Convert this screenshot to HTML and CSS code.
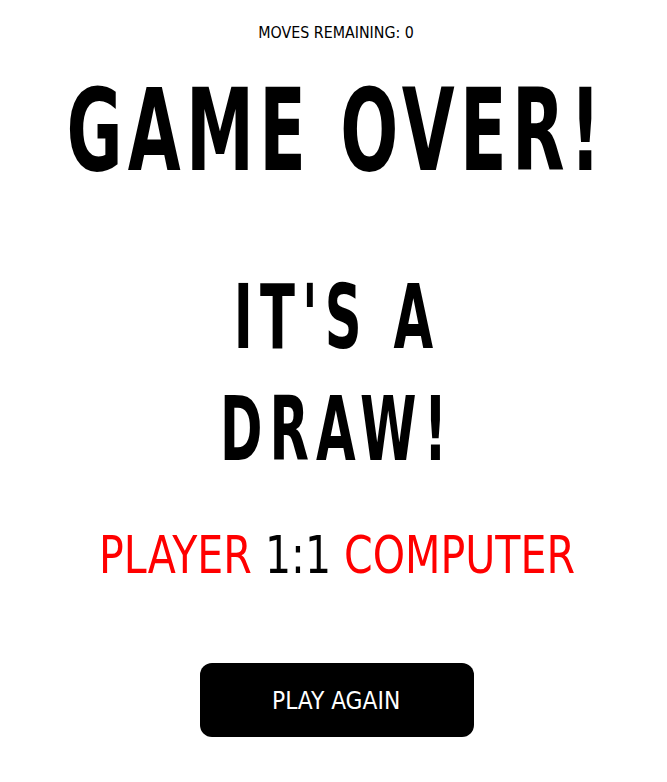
FILE: index.html
```html
<!DOCTYPE html>
<html>
<head>
<meta charset="utf-8">
<link rel="stylesheet" href="styles.css">
</head>
<body>
<main class="game">
  <p class="moves"><span class="sq sq-moves">Moves remaining: 0</span></p>
  <h1 class="title"><span class="sq sq-title">GAME OVER!</span></h1>
  <h2 class="result"><span class="sq sq-result">IT'S A<br>DRAW!</span></h2>
  <p class="score"><span class="sq sq-score"><span class="side">Player</span> <span class="nums">1:1</span> <span class="side">Computer</span></span></p>
  <button class="again"><span class="sq sq-btn">Play Again</span></button>
</main>
</body>
</html>
```
FILE: styles.css
```css
html, body { margin: 0; padding: 0; background: #fff; overflow-x: hidden; }
body { font-family: "DejaVu Sans Condensed", "DejaVu Sans", sans-serif; font-stretch: condensed; color: #000; }
.game { display: flex; flex-direction: column; align-items: center; text-align: center; box-sizing: border-box; width: 100%; padding-left: 6px; overflow: hidden; }
.sq { display: inline-block; white-space: nowrap; }
.moves { margin: 23px 0 0; font-size: 16.5px; line-height: 20px; text-transform: uppercase; }
.sq-moves { transform: scaleX(0.96); }
.title { margin: 31px 0 0; font-size: 114px; font-weight: 700; line-height: 114px; }
.sq-title { transform: scaleX(0.666); letter-spacing: 8px; }
.result { margin: 73px 0 0; font-size: 89px; font-weight: 700; line-height: 112px; }
.sq-result { transform: scaleX(0.64); letter-spacing: 11px; }
.score { margin: 40px 0 0; font-size: 52px; line-height: 60px; }
.sq-score { transform: scaleX(0.878); }
.side { color: #f00; text-transform: uppercase; }
.nums { font-weight: 200; }
.again { margin-top: 78px; width: 274px; height: 74px; background: #000; color: #fff; border: none; border-radius: 12px; font-family: inherit; font-stretch: condensed; font-size: 25px; text-transform: uppercase; padding: 0; }
.sq-btn { transform: scaleX(0.97); }
```
